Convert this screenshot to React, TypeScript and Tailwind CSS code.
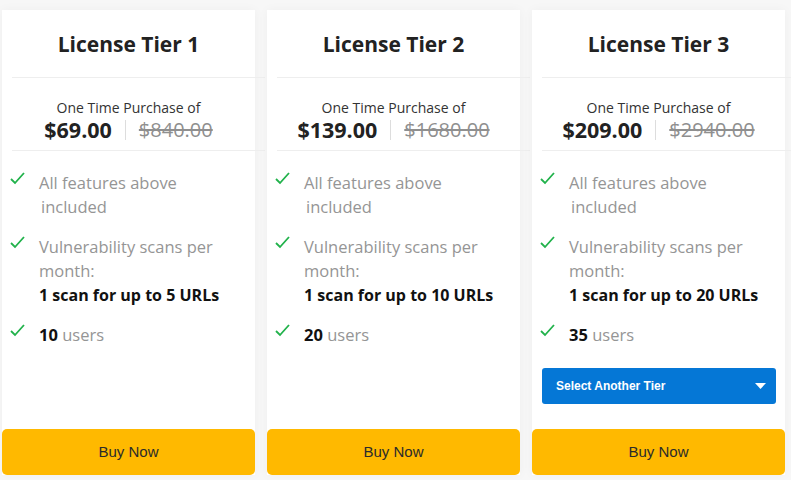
import { ReactNode } from 'react';

type Tier = {
	name: string;
	price: string;
	was: string;
	urls: number;
	users: number;
	selector?: boolean;
};

const TIERS: Tier[] = [
	{ name: 'License Tier 1', price: '$69.00', was: '$840.00', urls: 5, users: 10 },
	{ name: 'License Tier 2', price: '$139.00', was: '$1680.00', urls: 10, users: 20 },
	{ name: 'License Tier 3', price: '$209.00', was: '$2940.00', urls: 20, users: 35, selector: true },
];

//region Check
const Check = () => (
	<svg width="15" height="13" viewBox="0 0 15 13" className="mt-[1px] shrink-0">
		<path d="M1 7 L5 11 L14 1" fill="none" stroke="#21b24b" strokeWidth="1.8" />
	</svg>
);

const Feature = ({ children }: { children: ReactNode }) => (
	<li className="flex gap-[14px] pl-[8px]">
		<Check />
		<div className="text-[16.5px] leading-[24px] text-[#959595]">{children}</div>
	</li>
);

//region Card
const TierCard = ({ tier }: { tier: Tier }) => (
	<div className="flex flex-1 flex-col bg-white shadow-[0_0_10px_rgba(0,0,0,0.04)]">
		<div className="flex h-[67px] shrink-0 items-center justify-center pt-[3px] text-[21px] font-bold text-[#222]">
			{tier.name}
		</div>
		<div className="ml-[10px] h-px w-full bg-[#eeeeee]" />
		<div className="flex h-[72px] flex-col items-center pt-[21px]">
			<p className="text-[14px] leading-[18px] text-[#333]">One Time Purchase of</p>
			<div className="flex items-center">
				<span className="text-[21.5px] leading-[26px] font-bold text-[#222]">{tier.price}</span>
				<span className="mx-[13px] h-[20px] w-px bg-[#dddddd]" />
				<span className="text-[20px] leading-[26px] text-[#8f8f8f] line-through">{tier.was}</span>
			</div>
		</div>
		<div className="ml-[10px] h-px w-full bg-[#eeeeee]" />
		<ul className="flex flex-col gap-[16px] pt-[20px]">
			<Feature>
				All features above
				<br />
				<span className="pl-[2px]">included</span>
			</Feature>
			<Feature>
				Vulnerability scans per
				<br />
				month:
				<br />
				<b className="text-[16px] font-bold text-[#111]">1 scan for up to {tier.urls} URLs</b>
			</Feature>
			<Feature>
				<b className="font-bold text-[#111]">{tier.users}</b> users
			</Feature>
		</ul>
		{tier.selector && (
			<div className="mt-[21px] mr-[9px] ml-[10px] flex h-[36px] items-center justify-between rounded-[3px] bg-[#0577d6] pr-[10px] pl-[14px] font-['Liberation_Sans',Arial,sans-serif] text-[12px] font-bold text-white">
				<span>Select Another Tier</span>
				<svg width="11" height="6" viewBox="0 0 11 6">
					<path d="M0 0 H11 L5.5 6 Z" fill="white" />
				</svg>
			</div>
		)}
		<button className="mt-auto h-[46px] w-full shrink-0 rounded-[5px] bg-[#ffb900] font-['Liberation_Sans',Arial,sans-serif] text-[15px] text-[#2b2b2b]">
			Buy Now
		</button>
	</div>
);

//region App
const App = () => {
	return (
		<div className="flex h-[480px] w-full gap-[12px] overflow-hidden bg-[#f7f7f7] pt-[10px] pr-[6px] pb-[5px] pl-[2px] font-['Open_Sans','Noto_Sans',sans-serif]">
			{TIERS.map((t) => (
				<TierCard key={t.name} tier={t} />
			))}
		</div>
	);
};
//endregion

export default App;
